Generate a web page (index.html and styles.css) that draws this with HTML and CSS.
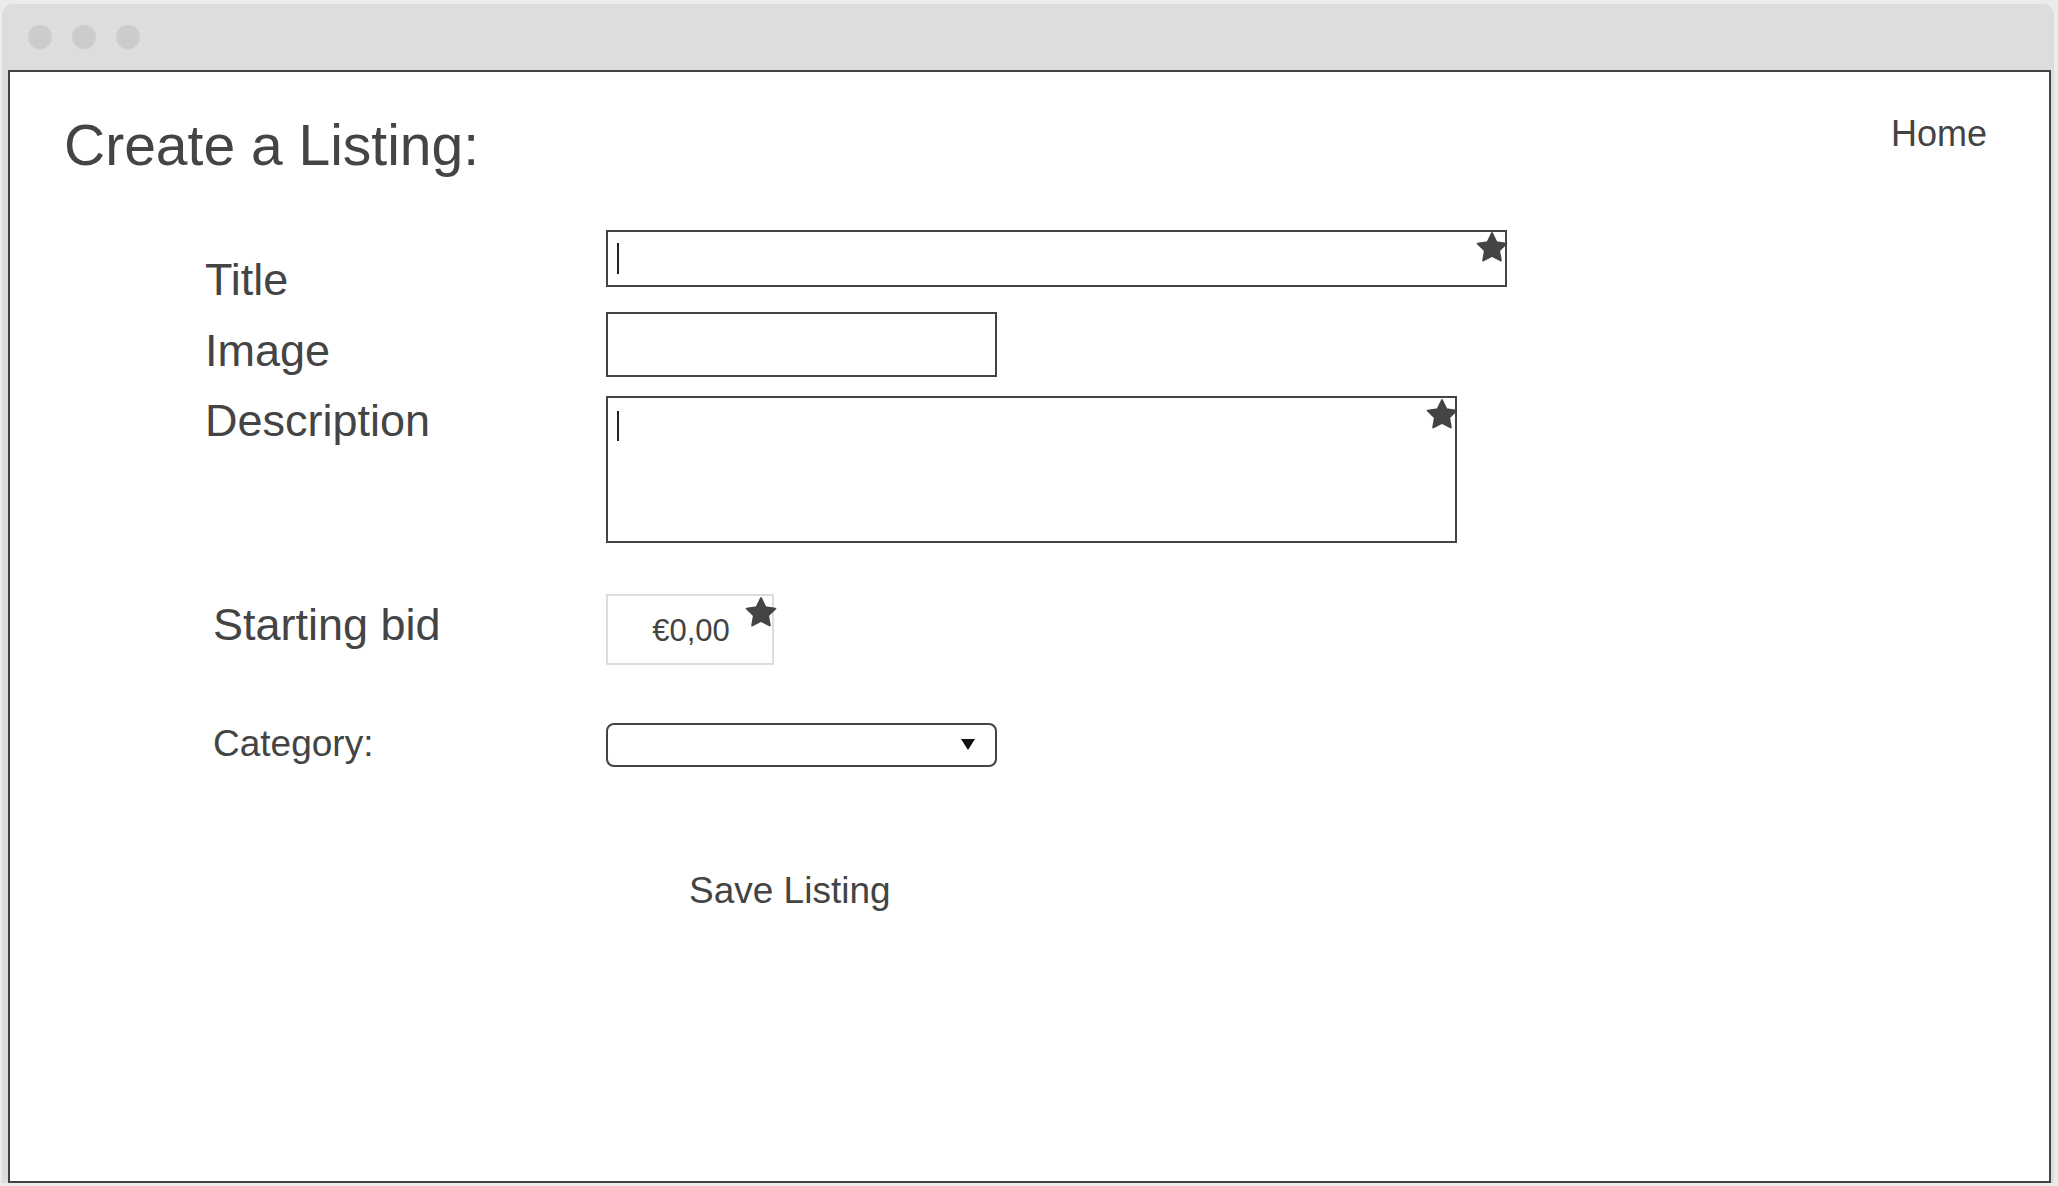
FILE: index.html
```html
<!DOCTYPE html>
<html lang="en">
<head>
<meta charset="utf-8">
<title>Create a Listing</title>
<link rel="stylesheet" href="styles.css">
</head>
<body>
<div class="window">
  <div class="titlebar">
    <span class="dot"></span><span class="dot"></span><span class="dot"></span>
  </div>
  <div class="content">
    <header class="header">
      <h1 class="page-title">Create a Listing:</h1>
      <a class="home-link" href="#">Home</a>
    </header>
    <form class="form">
      <div class="row row-title">
        <label class="label label-title">Title</label>
        <div class="field field-title">
          <span class="caret"></span>
          <svg class="star" viewBox="0 0 24 24"><path d="M12 1.5l3.1 6.4 7 1-5.1 4.9 1.2 7L12 17.5l-6.2 3.3 1.2-7-5.1-4.9 7-1z"/></svg>
        </div>
      </div>
      <div class="row row-image">
        <label class="label label-image">Image</label>
        <div class="field field-image"></div>
      </div>
      <div class="row row-desc">
        <label class="label label-desc">Description</label>
        <div class="field field-desc">
          <span class="caret"></span>
          <svg class="star" viewBox="0 0 24 24"><path d="M12 1.5l3.1 6.4 7 1-5.1 4.9 1.2 7L12 17.5l-6.2 3.3 1.2-7-5.1-4.9 7-1z"/></svg>
        </div>
      </div>
      <div class="row row-bid">
        <label class="label label-bid">Starting bid</label>
        <div class="field field-bid">
          <span class="bid-value">€0,00</span>
          <svg class="star star-bid" viewBox="0 0 24 24"><path d="M12 1.5l3.1 6.4 7 1-5.1 4.9 1.2 7L12 17.5l-6.2 3.3 1.2-7-5.1-4.9 7-1z"/></svg>
        </div>
      </div>
      <div class="row row-cat">
        <label class="label label-cat">Category:</label>
        <div class="field field-cat"><span class="arrow"></span></div>
      </div>
      <div class="row row-save">
        <span class="save">Save Listing</span>
      </div>
    </form>
  </div>
</div>
</body>
</html>
```
FILE: styles.css
```css
html, body {
  margin: 0;
  padding: 0;
}
body {
  background: #ececec;
  width: 2058px;
  height: 1186px;
  overflow: hidden;
  font-family: "Liberation Sans", Arial, sans-serif;
  color: #444444;
}
.window {
  margin: 4px 4px 0 2px;
  background: #dddddd;
  border-radius: 10px 10px 0 0;
  display: flex;
  flex-direction: column;
}
.titlebar {
  height: 66px;
  display: flex;
  align-items: center;
  gap: 20px;
  padding-left: 26px;
}
.dot {
  width: 24px;
  height: 24px;
  border-radius: 50%;
  background: #cccccc;
}
.content {
  margin-left: 6px;
  width: 2039px;
  height: 1109px;
  border: 2px solid #444444;
  background: #ffffff;
}
.header {
  display: flex;
  justify-content: space-between;
  align-items: flex-start;
  height: 63px;
  padding: 42px 62px 0 54px;
}
.page-title {
  margin: 0;
  font-size: 57px;
  font-weight: normal;
  line-height: 63px;
}
.home-link {
  font-size: 36px;
  line-height: 41px;
  color: #444444;
  text-decoration: none;
  margin-top: -1px;
}
.form {
  padding-left: 195px;
  margin-top: 53px;
  display: flex;
  flex-direction: column;
}
.row {
  display: flex;
  align-items: flex-start;
}
.label {
  width: 401px;
  font-size: 45px;
  line-height: 51px;
  flex: none;
}
.label-title { padding-top: 24px; }
.label-image { padding-top: 13px; }
.label-desc { margin-top: -1px; }
.label-bid { padding-top: 5px; padding-left: 8px; width: 393px; }
.label-cat { font-size: 37px; line-height: 42px; padding-left: 8px; width: 393px; margin-top: 0px; }
.row-title { height: 57px; }
.row-image { height: 65px; margin-top: 25px; }
.row-desc { height: 147px; margin-top: 19px; }
.row-bid { height: 71px; margin-top: 51px; }
.row-cat { height: 44px; margin-top: 58px; }
.row-save { margin-top: 103px; padding-left: 484px; }
.field {
  position: relative;
  box-sizing: border-box;
  border: 2px solid #444444;
  background: #ffffff;
}
.field-title { width: 901px; height: 57px; }
.field-image { width: 391px; height: 65px; }
.field-desc { width: 851px; height: 147px; }
.field-bid {
  width: 168px;
  height: 71px;
  border-color: #dddddd;
  display: flex;
  align-items: center;
  justify-content: center;
}
.field-cat {
  width: 391px;
  height: 44px;
  border-radius: 8px;
}
.caret {
  position: absolute;
  left: 9px;
  top: 11px;
  width: 2px;
  height: 31px;
  background: #222222;
}
.field-desc .caret { top: 13px; height: 30px; }
.star {
  position: absolute;
  top: -1px;
  right: -4px;
  width: 34px;
  height: 34px;
  fill: #444444;
  stroke: #444444;
  stroke-width: 1.4;
  stroke-linejoin: round;
}
.field-desc .star { top: 0px; }
.star-bid { top: 0px; right: -6px; }
.bid-value {
  font-size: 31px;
  line-height: 36px;
  color: #444444;
  margin-top: 2px;
  margin-left: 2px;
}
.arrow {
  position: absolute;
  right: 20px;
  top: 14px;
  width: 0;
  height: 0;
  border-left: 7px solid transparent;
  border-right: 7px solid transparent;
  border-top: 11px solid #111111;
}
.save {
  font-size: 37px;
  line-height: 42px;
  color: #444444;
}
```
